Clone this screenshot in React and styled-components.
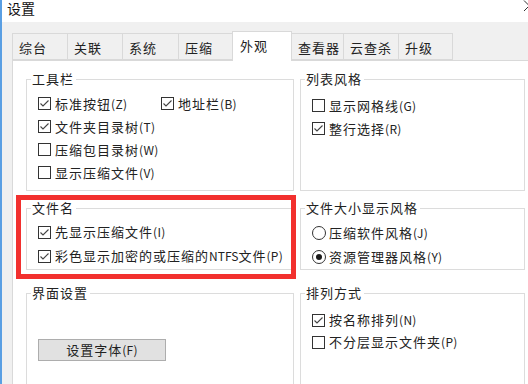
import React from "react";
import styled, { createGlobalStyle } from "styled-components";

const Global = createGlobalStyle`
  html, body { margin: 0; padding: 0; background: #ffffff; }
  body {
    font-family: "Noto Sans CJK SC", "Noto Sans", sans-serif;
    font-size: 13px;
    color: #222222;
  }
  * { box-sizing: border-box; }
`;

const Window = styled.div`
  position: relative;
  width: 528px;
  height: 384px;
  overflow: hidden;
  display: flex;
  flex-direction: column;
  background: #f0f0f0;
  border-left: 2px solid #5a9fe3;
`;

const TitleBar = styled.div`
  height: 22px;
  flex: 0 0 22px;
  background: #ffffff;
  display: flex;
  justify-content: space-between;
  align-items: flex-start;
  padding-left: 5px;
`;

const TitleText = styled.span`
  font-size: 14px;
  line-height: 16px;
  margin-top: 0px;
  color: #111;
`;

const CloseIcon = styled.svg`
  width: 12px;
  height: 12px;
  margin-right: -7px;
`;

const TabStrip = styled.div`
  display: flex;
  align-items: flex-end;
  margin: 9px 0 0 10px;
  position: relative;
  z-index: 1;
`;

const Tab = styled.div`
  width: ${(p) => p.$w}px;
  height: ${(p) => (p.$active ? 30 : 27)}px;
  margin-left: -1px;
  margin-bottom: ${(p) => (p.$active ? -1 : 0)}px;
  &:first-child { margin-left: 0; }
  border: 1px solid #d9d9d9;
  border-bottom: ${(p) => (p.$active ? "none" : "1px solid #d9d9d9")};
  background: ${(p) => (p.$active ? "#ffffff" : "#f0f0f0")};
  position: relative;
  z-index: ${(p) => (p.$active ? 2 : 1)};
  display: flex;
  align-items: center;
  padding: ${(p) => (p.$active ? "0 0 1px 7px" : "2px 0 0 6px")};
  letter-spacing: 1px;
  line-height: 16px;
  white-space: nowrap;
`;

const Panel = styled.div`
  flex: 1;
  margin: 0 -20px 0 10px;
  background: #ffffff;
  border: 1px solid #d9d9d9;
  padding: 10px 0 0 13px;
  display: flex;
  flex-direction: column;
`;

const Row = styled.div`
  display: grid;
  grid-template-columns: 268px 225px;
  column-gap: 6px;
  height: ${(p) => p.$h}px;
  margin-top: ${(p) => p.$mt || 0}px;
  flex: 0 0 auto;
`;

const Group = styled.fieldset`
  margin: 0;
  padding: 0;
  border: 1px solid #dcdcdc;
  min-width: 0;
`;

const Legend = styled.legend`
  margin-left: 4px;
  padding: 0 2px 0 1px;
  line-height: 16px;
  letter-spacing: 1px;
`;

const Body = styled.div`
  padding: ${(p) => p.$pt}px 0 0 11px;
  display: flex;
  flex-direction: column;
`;

const ItemRow = styled.div`
  display: flex;
  align-items: center;
  height: ${(p) => p.$h}px;
`;

const Item = styled.label`
  display: flex;
  align-items: center;
  width: ${(p) => (p.$w ? `${p.$w}px` : "auto")};
  line-height: 16px;
  letter-spacing: 1px;
  white-space: nowrap;
`;

const Key = styled.span`
  font-size: 12px;
  letter-spacing: 0.3px;
`;

const Latin = styled.span`
  font-size: 12px;
  letter-spacing: 0;
`;

const Box = styled.span`
  width: 13px;
  height: 13px;
  border: 1px solid #333333;
  background: #ffffff;
  margin-right: 4px;
  display: inline-flex;
  align-items: center;
  justify-content: center;
  flex: 0 0 auto;
`;

const Radio = styled.span`
  width: 14px;
  height: 14px;
  border: 1px solid #333333;
  border-radius: 50%;
  background: #ffffff;
  margin-right: 3px;
  display: inline-flex;
  align-items: center;
  justify-content: center;
  flex: 0 0 auto;
  &::after {
    content: "";
    width: 6px;
    height: 6px;
    border-radius: 50%;
    background: ${(p) => (p.$on ? "#1a1a1a" : "transparent")};
  }
`;

const Button = styled.div`
  width: 128px;
  height: 22px;
  background: #e1e1e1;
  border: 1px solid #adadad;
  display: flex;
  align-items: center;
  justify-content: center;
  letter-spacing: 1px;
  line-height: 16px;
`;

const Highlight = styled.div`
  position: absolute;
  left: 14px;
  top: 195px;
  width: 280px;
  height: 84px;
  border: 5px solid #f2302e;
  pointer-events: none;
`;

const Check = ({ on }) => (
  <Box>
    {on && (
      <svg width="11" height="11" viewBox="0 0 11 11">
        <polyline points="1.5,5.5 4,8 9.5,2.5" fill="none" stroke="#444" strokeWidth="1.1" />
      </svg>
    )}
  </Box>
);

const Label = ({ text, k }) => (
  <>
    {text}
    <Key>({k})</Key>
  </>
);

const CheckItem = ({ on, children, w }) => (
  <Item $w={w}>
    <Check on={on} />
    {children}
  </Item>
);

const RadioItem = ({ on, children }) => (
  <Item>
    <Radio $on={on} />
    {children}
  </Item>
);

const tabs = [
  { label: "综台", w: 56 },
  { label: "关联", w: 56 },
  { label: "系统", w: 57 },
  { label: "压缩", w: 55 },
  { label: "外观", w: 60, active: true },
  { label: "查看器", w: 53 },
  { label: "云查杀", w: 56 },
  { label: "升级", w: 55 },
];

export default function App() {
  return (
    <>
      <Global />
      <Window>
        <TitleBar>
          <TitleText>设置</TitleText>
          <CloseIcon viewBox="0 0 12 12">
            <path d="M1 0.5 L11.5 11 M11.5 0.5 L1 11" stroke="#333" strokeWidth="1" fill="none" />
          </CloseIcon>
        </TitleBar>
        <TabStrip>
          {tabs.map((t) => (
            <Tab key={t.label} $w={t.w} $active={t.active}>
              {t.label}
            </Tab>
          ))}
        </TabStrip>
        <Panel>
          <Row $h={120}>
            <Group>
              <Legend>工具栏</Legend>
              <Body $pt={5}>
                <ItemRow $h={23}>
                  <CheckItem on w={123}><Label text="标准按钮" k="Z" /></CheckItem>
                  <CheckItem on><Label text="地址栏" k="B" /></CheckItem>
                </ItemRow>
                <ItemRow $h={23}>
                  <CheckItem on><Label text="文件夹目录树" k="T" /></CheckItem>
                </ItemRow>
                <ItemRow $h={23}>
                  <CheckItem><Label text="压缩包目录树" k="W" /></CheckItem>
                </ItemRow>
                <ItemRow $h={23}>
                  <CheckItem><Label text="显示压缩文件" k="V" /></CheckItem>
                </ItemRow>
              </Body>
            </Group>
            <Group>
              <Legend>列表风格</Legend>
              <Body $pt={7}>
                <ItemRow $h={23}>
                  <CheckItem><Label text="显示网格线" k="G" /></CheckItem>
                </ItemRow>
                <ItemRow $h={23}>
                  <CheckItem on><Label text="整行选择" k="R" /></CheckItem>
                </ItemRow>
              </Body>
            </Group>
          </Row>
          <Row $h={70} $mt={9}>
            <Group>
              <Legend>文件名</Legend>
              <Body $pt={4}>
                <ItemRow $h={24}>
                  <CheckItem on><Label text="先显示压缩文件" k="I" /></CheckItem>
                </ItemRow>
                <ItemRow $h={24}>
                  <CheckItem on>
                    彩色显示加密的或压缩的<Latin>NTFS</Latin>文件<Key>(P)</Key>
                  </CheckItem>
                </ItemRow>
              </Body>
            </Group>
            <Group>
              <Legend>文件大小显示风格</Legend>
              <Body $pt={5}>
                <ItemRow $h={24}>
                  <RadioItem><Label text="压缩软件风格" k="J" /></RadioItem>
                </ItemRow>
                <ItemRow $h={24}>
                  <RadioItem on><Label text="资源管理器风格" k="Y" /></RadioItem>
                </ItemRow>
              </Body>
            </Group>
          </Row>
          <Row $h={130} $mt={15}>
            <Group>
              <Legend>界面设置</Legend>
              <Body $pt={38}>
                <Button>设置字体<Key>(F)</Key></Button>
              </Body>
            </Group>
            <Group>
              <Legend>排列方式</Legend>
              <Body $pt={8}>
                <ItemRow $h={22}>
                  <CheckItem on><Label text="按名称排列" k="N" /></CheckItem>
                </ItemRow>
                <ItemRow $h={22}>
                  <CheckItem><Label text="不分层显示文件夹" k="P" /></CheckItem>
                </ItemRow>
              </Body>
            </Group>
          </Row>
        </Panel>
        <Highlight />
      </Window>
    </>
  );
}
